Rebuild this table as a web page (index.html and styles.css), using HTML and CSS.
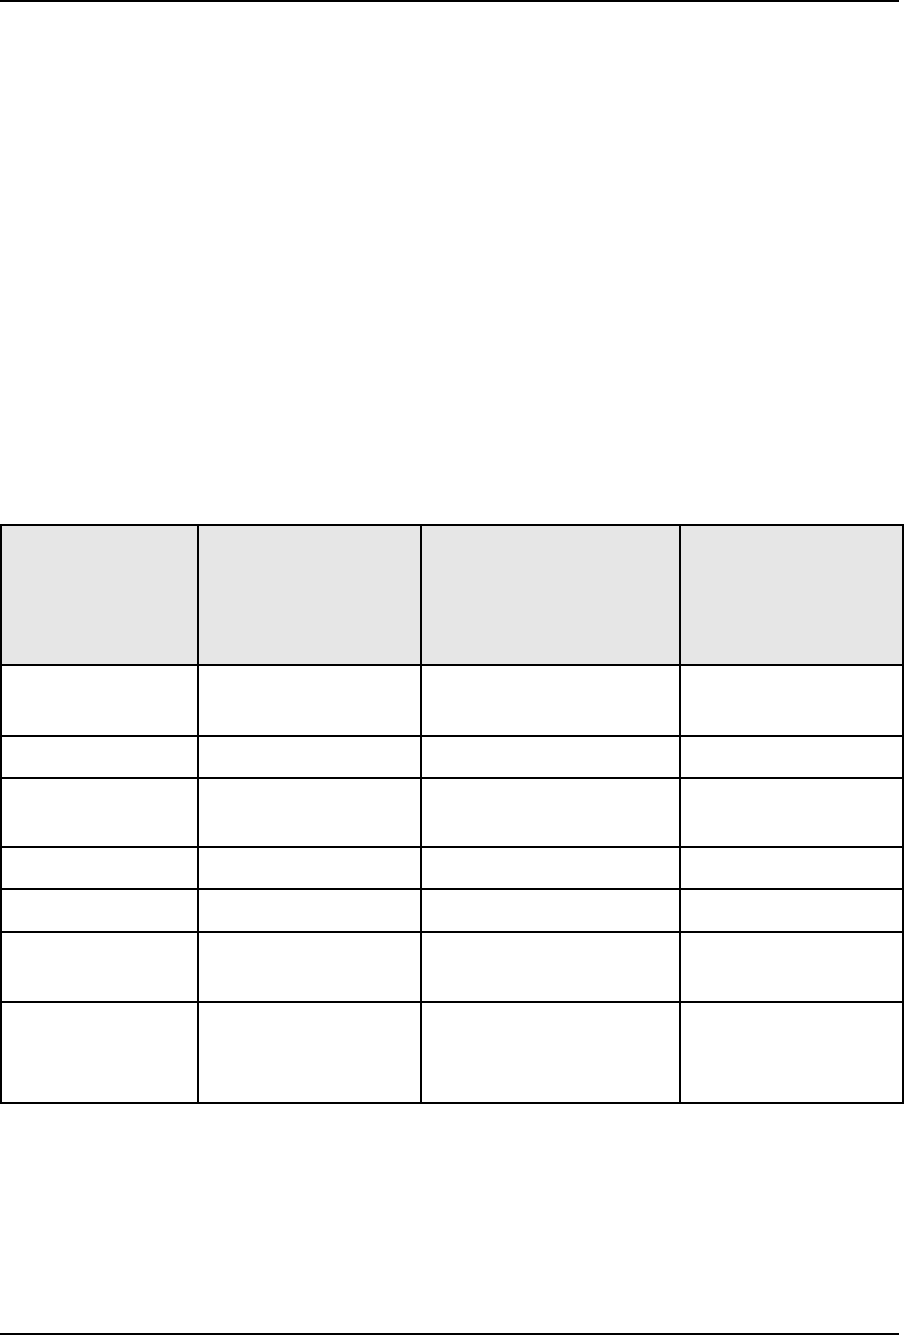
FILE: index.html
```html
<!DOCTYPE html>
<html lang="en">
<head>
<meta charset="utf-8">
<title>Page</title>
<link rel="stylesheet" href="styles.css">
</head>
<body>
<div class="page">
  <div class="rule rule-top"></div>
  <div class="grid-table">
    <div class="cell head"></div><div class="cell head"></div><div class="cell head"></div><div class="cell head"></div>
    <div class="cell"></div><div class="cell"></div><div class="cell"></div><div class="cell"></div>
    <div class="cell"></div><div class="cell"></div><div class="cell"></div><div class="cell"></div>
    <div class="cell"></div><div class="cell"></div><div class="cell"></div><div class="cell"></div>
    <div class="cell"></div><div class="cell"></div><div class="cell"></div><div class="cell"></div>
    <div class="cell"></div><div class="cell"></div><div class="cell"></div><div class="cell"></div>
    <div class="cell"></div><div class="cell"></div><div class="cell"></div><div class="cell"></div>
    <div class="cell"></div><div class="cell"></div><div class="cell"></div><div class="cell"></div>
  </div>
  <div class="rule rule-bottom"></div>
</div>
</body>
</html>
```

FILE: styles.css
```css
html, body {
  margin: 0;
  padding: 0;
  background: #ffffff;
  font-family: "Liberation Sans", Arial, sans-serif;
}

.page {
  width: 904px;
  display: flex;
  flex-direction: column;
}

.rule {
  width: 899px;
  height: 2px;
  background: #000000;
}

.grid-table {
  margin-top: 522px;
  display: grid;
  grid-template-columns: 197px 223px 259px 223px;
  grid-template-rows: 140px 71px 42px 69px 42px 43px 70px 101px;
  border-top: 2px solid #000000;
  border-left: 2px solid #000000;
  width: 904px;
  box-sizing: border-box;
}

.cell {
  box-sizing: border-box;
  border-right: 2px solid #000000;
  border-bottom: 2px solid #000000;
  background: #ffffff;
}

.cell.head {
  background: #e6e6e6;
}

.rule-bottom {
  margin-top: 229px;
}
```
